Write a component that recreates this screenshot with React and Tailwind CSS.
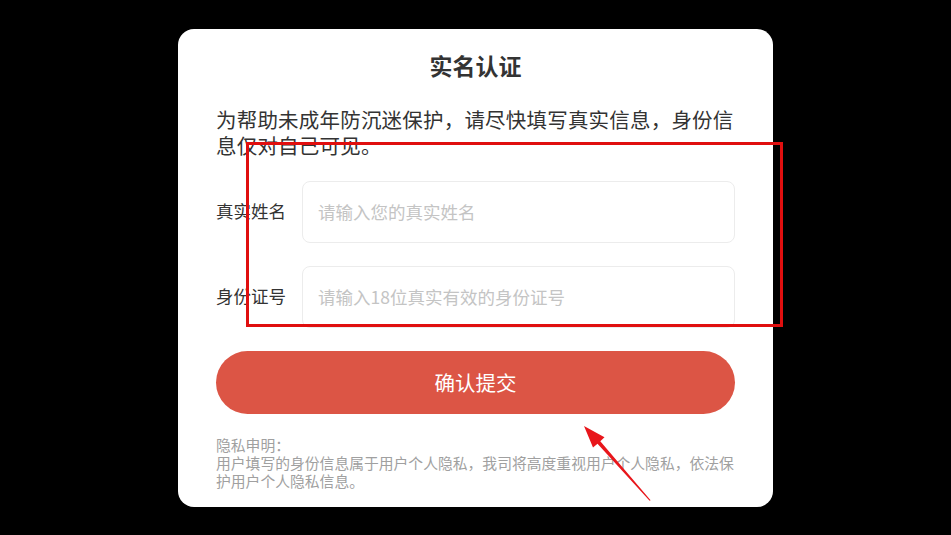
import React from "react";

const font = { fontFamily: '"Noto Sans CJK SC", "Noto Sans", sans-serif' };

const fields = [
  { label: "真实姓名", placeholder: "请输入您的真实姓名" },
  { label: "身份证号", placeholder: "请输入18位真实有效的身份证号" },
];

const App = () => {
  return (
    <div
      className="relative w-full h-[535px] bg-black flex items-center justify-center overflow-hidden"
      style={font}
    >
      {/* Card */}
      <div className="w-[595px] h-[478px] bg-white rounded-[16px] px-[38px] pt-[20px] pb-[16px] flex flex-col">
        <h1 className="text-center text-[23px] leading-[32px] font-bold text-[#333]">实名认证</h1>

        <p className="mt-[25px] text-[20.5px] tracking-[0.2px] leading-[26px] text-[#333]">
          为帮助未成年防沉迷保护，请尽快填写真实信息，身份信息仅对自己可见。
        </p>

        <div className="mt-[23px] flex flex-col gap-[23px]">
          {fields.map(({ label, placeholder }) => (
            <div key={label} className="flex items-center gap-[16px]">
              <span className="w-[70px] shrink-0 text-[17.5px] text-[#333] whitespace-nowrap">{label}</span>
              <input
                className="flex-1 h-[62px] border border-[#ececec] rounded-[8px] px-[15px] text-[17.5px] outline-none placeholder:text-[#c4c4c4]"
                placeholder={placeholder}
              />
            </div>
          ))}
        </div>

        <button className="mt-[23px] h-[63px] w-full rounded-full bg-[#dc5545] text-white text-[20.5px]">
          确认提交
        </button>

        <div className="mt-[22px] text-[14.8px] leading-[18px] text-[#a0a0a0]">
          <p>隐私申明：</p>
          <p>用户填写的身份信息属于用户个人隐私，我司将高度重视用户个人隐私，依法保护用户个人隐私信息。</p>
        </div>
      </div>

      {/* Annotation overlay */}
      <div className="absolute left-[246px] top-[142px] w-[537px] h-[185px] border-[3px] border-[#e00f0f] pointer-events-none" />
      <svg className="absolute inset-0 pointer-events-none" width="951" height="535" viewBox="0 0 951 535">
        <polygon
          points="584,426 604.5,437.2 600.3,441.3 650.6,500.3 649.6,500.8 597.5,443.8 593,447.6"
          fill="#e8161b"
        />
      </svg>
    </div>
  );
};

export default App;
